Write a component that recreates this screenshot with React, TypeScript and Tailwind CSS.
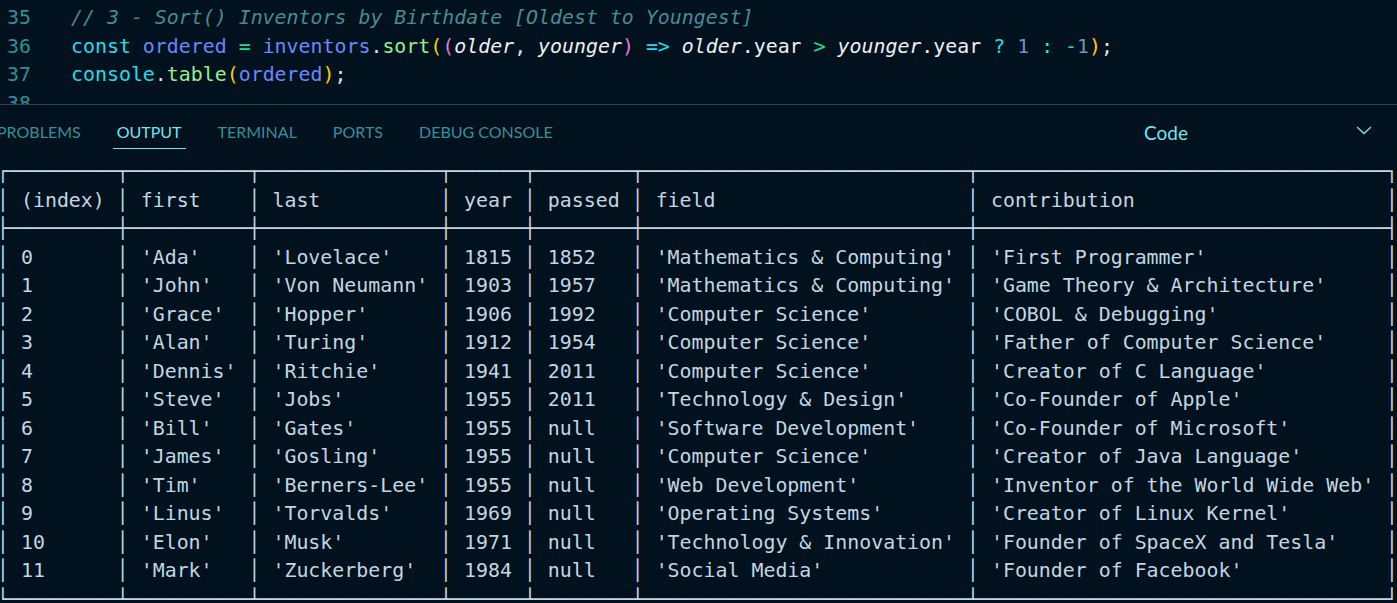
const inventors = [
  ["0", "'Ada'", "'Lovelace'", "1815", "1852", "'Mathematics & Computing'", "'First Programmer'"],
  ["1", "'John'", "'Von Neumann'", "1903", "1957", "'Mathematics & Computing'", "'Game Theory & Architecture'"],
  ["2", "'Grace'", "'Hopper'", "1906", "1992", "'Computer Science'", "'COBOL & Debugging'"],
  ["3", "'Alan'", "'Turing'", "1912", "1954", "'Computer Science'", "'Father of Computer Science'"],
  ["4", "'Dennis'", "'Ritchie'", "1941", "2011", "'Computer Science'", "'Creator of C Language'"],
  ["5", "'Steve'", "'Jobs'", "1955", "2011", "'Technology & Design'", "'Co-Founder of Apple'"],
  ["6", "'Bill'", "'Gates'", "1955", "null", "'Software Development'", "'Co-Founder of Microsoft'"],
  ["7", "'James'", "'Gosling'", "1955", "null", "'Computer Science'", "'Creator of Java Language'"],
  ["8", "'Tim'", "'Berners-Lee'", "1955", "null", "'Web Development'", "'Inventor of the World Wide Web'"],
  ["9", "'Linus'", "'Torvalds'", "1969", "null", "'Operating Systems'", "'Creator of Linux Kernel'"],
  ["10", "'Elon'", "'Musk'", "1971", "null", "'Technology & Innovation'", "'Founder of SpaceX and Tesla'"],
  ["11", "'Mark'", "'Zuckerberg'", "1984", "null", "'Social Media'", "'Founder of Facebook'"],
];

const header = ["(index)", "first", "last", "year", "passed", "field", "contribution"];

function buildTable() {
  const widths = header.map((h, i) =>
    Math.max(h.length, ...inventors.map((r) => r[i].length)) + 2
  );
  const line = (l: string, m: string, r: string) =>
    l + widths.map((w) => "─".repeat(w)).join(m) + r;
  const row = (cells: string[]) =>
    "│" + cells.map((c, i) => (" " + c).padEnd(widths[i])).join("│") + "│";
  return [
    line("┌", "┬", "┐"),
    row(header),
    line("├", "┼", "┤"),
    ...inventors.map(row),
    line("└", "┴", "┘"),
  ].join("\n");
}

const mono = "font-['DejaVu_Sans_Mono',monospace] text-[19.9px] leading-[28.5px]";

export default function App() {
  const tabs = ["PROBLEMS", "OUTPUT", "TERMINAL", "PORTS", "DEBUG CONSOLE"];
  return (
    <div className="w-[1397px] h-[603px] overflow-hidden bg-[#01111d] flex flex-col">
      {/* editor */}
      <div className={`h-[105px] shrink-0 overflow-hidden border-b border-[#1d4752] pt-[4px] ${mono}`}>
        <div className="flex">
          <span className="w-[71px] pl-[7px] text-[#2f9096]">35</span>
          <span className="italic text-[#4a8a92]">// 3 - Sort() Inventors by Birthdate [Oldest to Youngest]</span>
        </div>
        <div className="flex whitespace-pre">
          <span className="w-[71px] pl-[7px] text-[#2f9096]">36</span>
          <span>
            <span className="text-[#22dcea]">const </span>
            <span className="text-[#6b88ff]">ordered </span>
            <span className="text-[#1fe08c]">= </span>
            <span className="text-[#6b88ff]">inventors</span>
            <span className="text-[#d9e4ea]">.</span>
            <span className="text-[#96ef8c]">sort</span>
            <span className="text-[#ffcc00]">(</span>
            <span className="text-[#e27ad6]">(</span>
            <span className="italic text-[#eef2f5]">older</span>
            <span className="text-[#d9e4ea]">, </span>
            <span className="italic text-[#eef2f5]">younger</span>
            <span className="text-[#e27ad6]">)</span>
            <span className="text-[#22dcea]"> =&gt; </span>
            <span className="italic text-[#eef2f5]">older</span>
            <span className="text-[#eef2f5]">.year </span>
            <span className="text-[#1fe08c]">&gt; </span>
            <span className="italic text-[#eef2f5]">younger</span>
            <span className="text-[#eef2f5]">.year </span>
            <span className="text-[#22dcea]">? </span>
            <span className="text-[#6f93c2]">1 </span>
            <span className="text-[#22dcea]">: </span>
            <span className="text-[#1fe08c]">-</span>
            <span className="text-[#6f93c2]">1</span>
            <span className="text-[#ffcc00]">)</span>
            <span className="text-[#d9e4ea]">;</span>
          </span>
        </div>
        <div className="flex whitespace-pre">
          <span className="w-[71px] pl-[7px] text-[#2f9096]">37</span>
          <span>
            <span className="text-[#22dcea]">console</span>
            <span className="text-[#d9e4ea]">.</span>
            <span className="text-[#96ef8c]">table</span>
            <span className="text-[#ffcc00]">(</span>
            <span className="text-[#6b88ff]">ordered</span>
            <span className="text-[#ffcc00]">)</span>
            <span className="text-[#d9e4ea]">;</span>
          </span>
        </div>
        <div className="flex">
          <span className="w-[71px] pl-[7px] text-[#2f9096]">38</span>
        </div>
      </div>

      {/* panel header */}
      <div className="h-[53px] shrink-0 flex items-center font-['Lato',sans-serif]">
        <div className="flex items-center gap-[28px] ml-[-7px]">
          {tabs.map((t) => (
            <div
              key={t}
              className={`px-1 pt-[7px] pb-[6px] border-b text-[16px] leading-[20px] ${
                t === "OUTPUT" ? "border-[#6fe3ef] text-[#74e6f2]" : "border-transparent text-[#3a8e97]"
              }`}
            >
              {t}
            </div>
          ))}
        </div>
        <div className="ml-auto flex items-center">
          <span className="text-[19px] text-[#74e6f2] mr-[168px] mt-[3px]">Code</span>
          <svg width="16" height="9" viewBox="0 0 16 9" className="mr-[25px] mb-[2px]">
            <path d="M1 1l7 6.5L15 1" fill="none" stroke="#74e6f2" strokeWidth="1.3" />
          </svg>
        </div>
      </div>

      {/* console.table output */}
      <pre className={`shrink-0 ml-[-3px] text-[#c3d6e1] ${mono}`}>{buildTable()}</pre>
    </div>
  );
}
